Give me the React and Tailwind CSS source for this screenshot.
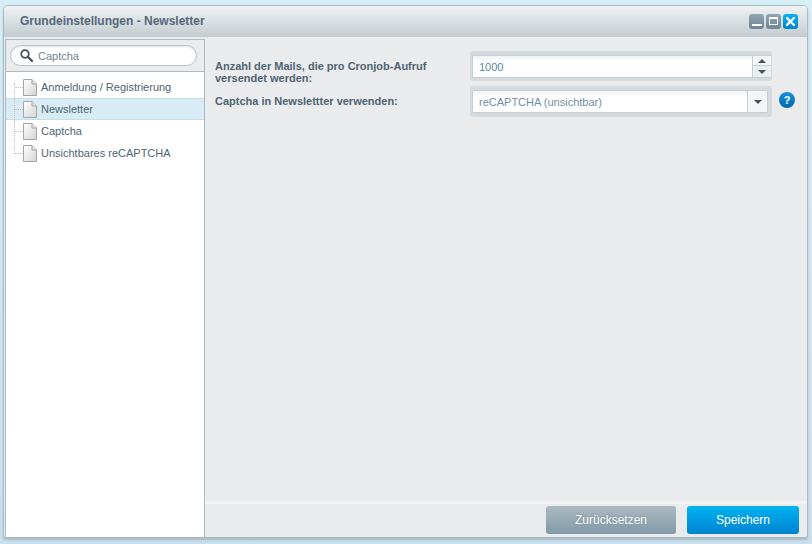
import React from "react";

const treeItems = ["Anmeldung / Registrierung", "Newsletter", "Captcha", "Unsichtbares reCAPTCHA"];

function PageIcon() {
  return (
    <svg width="14" height="17" viewBox="0 0 14 17" className="block shrink-0">
      <defs>
        <linearGradient id="pg" x1="0" y1="0" x2="1" y2="1">
          <stop offset="0" stopColor="#ffffff" />
          <stop offset="1" stopColor="#d4d4d4" />
        </linearGradient>
      </defs>
      <path d="M.5.5H9L13.5 5V16.500H.5Z" fill="url(#pg)" stroke="#a4a4a4" />
      <path d="M9 .5V5H13.500" fill="#e4e4e4" stroke="#a4a4a4" />
    </svg>
  );
}

function TreeRow({ label, index, active }) {
  return (
    <div className={`h-[22px] flex items-center relative border-y ${active ? "bg-[#d9ebf5] border-[#c4dfee]" : "border-transparent"}`}>
      <div className={`absolute left-[8px] w-0 border-l border-dotted border-[#c0c0c0] ${index === 0 ? "top-[6px] bottom-0" : index === 3 ? "top-0 h-[11px]" : "-top-px -bottom-px"}`}></div>
      <div className="w-[8px] ml-[9px] border-t border-dotted border-[#c0c0c0]"></div>
      <PageIcon />
      <span className="ml-[4px] text-[11px] text-[#4f6575] whitespace-nowrap">{label}</span>
    </div>
  );
}

function WinButton({ className, children }) {
  return (
    <div className={`w-[15px] h-[15px] rounded-[3px] flex items-center justify-center ${className}`}>{children}</div>
  );
}

function Arrow({ up }) {
  return (
    <svg width="8" height="4" viewBox="0 0 8 4" className="block">
      <path d={up ? "M0 4L4 0L8 4Z" : "M0 0L8 0L4 4Z"} fill="#46545e" />
    </svg>
  );
}

export default function App() {
  return (
    <div
      className="w-[812px] h-[544px] overflow-hidden bg-gradient-to-b from-[#d6eef6] to-[#c9dfee] pt-[5px] pl-[3px] text-[#475c6b]"
      style={{ fontFamily: '"Liberation Sans", Arial, sans-serif' }}
    >
      <div className="w-[805px] h-[533px] rounded-t-[5px] rounded-b-[3px] border border-[#a9bcc6] flex flex-col bg-[#e9ebed] shadow-[0_2px_2px_#a8bccb] overflow-hidden">
        <div className="h-[31px] shrink-0 mb-[2px] bg-gradient-to-b from-[#f0f2f3] to-[#c3ccd1] flex items-center pl-[16px] pr-[9px]">
          <span className="text-[12px] font-bold text-[#54687a] mt-[-1px]">Grundeinstellungen - Newsletter</span>
          <div className="ml-auto flex gap-[2px] mt-[-1px]">
            <WinButton className="bg-gradient-to-b from-[#8fa3b0] to-[#6f8594]">
              <div className="w-[10px] h-[2px] bg-white mt-[8px]"></div>
            </WinButton>
            <WinButton className="bg-gradient-to-b from-[#8fa3b0] to-[#6f8594]">
              <div className="w-[9px] h-[8px] border border-white border-t-2"></div>
            </WinButton>
            <WinButton className="bg-gradient-to-b from-[#00b4f0] to-[#0083d0]">
              <svg width="9" height="9" viewBox="0 0 9 9" className="block">
                <path d="M1 1L8 8M8 1L1 8" stroke="#fff" strokeWidth="2.300" strokeLinecap="square" />
              </svg>
            </WinButton>
          </div>
        </div>

        <div className="flex-1 flex min-h-0 pl-px">
          <div className="w-[200px] shrink-0 flex flex-col border border-[#a9bcc6] border-b-0 bg-white">
            <div className="h-[32px] shrink-0 bg-[#e9ebed] border-b border-[#a9bcc6] flex items-center px-[4px]">
              <div className="w-[187px] h-[21px] rounded-full border border-[#b4c5cf] bg-white flex items-center pl-[9px] shadow-[inset_0_1px_2px_#dde3e7]">
                <svg width="13" height="13" viewBox="0 0 13 13" className="block">
                  <circle cx="5" cy="5" r="3.800" fill="none" stroke="#3f4d57" strokeWidth="1.700" />
                  <path d="M8 8L12 12" stroke="#3f4d57" strokeWidth="2.200" strokeLinecap="round" />
                </svg>
                <span className="ml-[5px] mt-[1px] text-[11px] text-[#6f8594]">Captcha</span>
              </div>
            </div>
            <div className="pt-[4px]">
              {treeItems.map((item, i) => (
                <TreeRow key={item} label={item} index={i} active={i === 1} />
              ))}
            </div>
          </div>

          <div className="flex-1 flex flex-col min-w-0">
            <div className="flex-1 pl-[10px] pt-[12px]">
              <div className="flex h-[30px]">
                <div className="w-[255px] pt-[9px] text-[11px] leading-[12px] font-bold text-[#4f6473]">
                  Anzahl der Mails, die pro Cronjob-Aufruf versendet werden:
                </div>
                <div className="w-[302px] h-[30px] bg-[#d5dadf] rounded-[3px] pt-[4px] pl-[2px] pr-px">
                  <div className="h-[23px] bg-gradient-to-b from-[#f0f2f3] to-white to-30% border border-[#c4ced5] border-r-0 rounded-l-[2px] flex">
                    <span className="flex-1 pl-[6px] text-[11px] leading-[22px] text-[#5c88aa]">1000</span>
                    <div className="w-[19px] border-l border-[#c4ced5] flex flex-col">
                      <div className="h-[10px] border-b border-[#c4ced5] flex items-center justify-center bg-[#f3f5f6]"><Arrow up /></div>
                      <div className="flex-1 flex items-center justify-center bg-[#eceef0]"><Arrow /></div>
                    </div>
                  </div>
                </div>
              </div>
              <div className="flex mt-[5px] items-start">
                <div className="w-[255px] pt-[9px] text-[11px] leading-[12px] font-bold text-[#4f6473]">
                  Captcha in Newslettter verwenden:
                </div>
                <div className="w-[302px] h-[31px] bg-[#d5dadf] rounded-[3px] pt-[4px] pl-[2px]">
                  <div className="h-[23px] w-[296px] bg-gradient-to-b from-[#f0f2f3] to-white to-30% border border-[#c4ced5] rounded-[2px] flex">
                    <span className="flex-1 pl-[6px] text-[11px] leading-[22px] text-[#6f8ea6]">reCAPTCHA (unsichtbar)</span>
                    <div className="w-[20px] border-l border-[#c4ced5] flex items-center justify-center bg-[#f3f5f6]"><Arrow /></div>
                  </div>
                </div>
                <div className="ml-[7px] mt-[6px] w-[16px] h-[16px] rounded-full bg-gradient-to-b from-[#1690d8] to-[#0068b0] flex items-center justify-center text-[11px] font-bold text-white">?</div>
              </div>
            </div>

            <div className="h-[36px] shrink-0 border-t-[3px] border-[#f2f4f5] flex items-start justify-end gap-[11px] pr-[8px] pt-[2px]">
              <div className="w-[130px] h-[28px] rounded-[3px] bg-gradient-to-b from-[#abbac3] to-[#819aa7] flex items-center justify-center text-[12px] text-white [text-shadow:0_0_2px_#6f8594]">Zurücksetzen</div>
              <div className="w-[112px] h-[28px] rounded-[3px] bg-gradient-to-b from-[#00b4f0] to-[#0083d0] flex items-center justify-center text-[12px] text-white">Speichern</div>
            </div>
          </div>
        </div>
      </div>
    </div>
  );
}
